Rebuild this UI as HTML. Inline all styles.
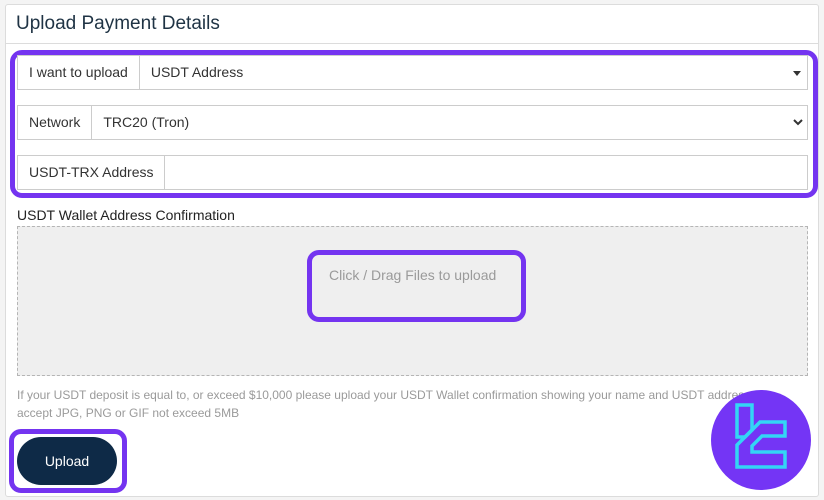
<!DOCTYPE html>
<html><head><meta charset="utf-8"><style>
*{box-sizing:border-box;margin:0;padding:0}
body{width:824px;height:500px;background:#f4f4f4;font-family:"Liberation Sans",Arial,sans-serif;position:relative;overflow:hidden}
.card{position:absolute;left:5px;top:4px;width:814px;height:493px;background:#fff;border:1px solid #dcdcdc;border-radius:3px}
.hdr{position:absolute;left:6px;top:5px;width:812px;height:39px;border-bottom:1px solid #dcdcdc;font-size:19px;color:#1f3344;padding:8px 0 0 10px}
.pb{position:absolute;border:5px solid #7434f0;border-radius:12px}
.row{position:absolute;left:17px;width:791px;height:35px;border:1px solid #ccc;background:#fff;font-size:14px;color:#333;display:flex}
.row .lab{background:#fff;border-right:1px solid #ccc;padding:0 11px;line-height:33px;white-space:nowrap}
.row .val{padding-left:11px;line-height:33px;flex:1;position:relative}
.lbl{position:absolute;left:17px;top:207px;font-size:14px;color:#222}
.dz{position:absolute;left:17px;top:226px;width:791px;height:150px;background:#efefef;border:1px dashed #b5b5b5}
.dzt{position:absolute;left:329px;top:267px;font-size:14px;color:#9a9a9a}
.note{position:absolute;left:17px;top:386px;font-size:12px;color:#9a9a9a;line-height:18px;width:760px}
.btn{position:absolute;left:17px;top:437px;width:100px;height:48px;background:#0e2a47;border-radius:24px;color:#fff;font-size:14px;text-align:center;line-height:48px}
</style></head><body>
<div class="card"></div>
<div class="hdr">Upload Payment Details</div>
<div class="pb" style="left:10px;top:50px;width:808px;height:148px"></div>
<div class="row" style="top:55px"><div class="lab">I want to upload</div><div class="val">USDT Address<span style="position:absolute;right:6px;top:15px;border-left:4px solid transparent;border-right:4px solid transparent;border-top:5px solid #333"></span></div></div>
<div class="row" style="top:105px"><div class="lab">Network</div><div class="val">TRC20 (Tron)<svg style="position:absolute;right:4px;top:12px" width="10" height="8" viewBox="0 0 10 8"><path d="M1 2 L5 6 L9 2" stroke="#333" stroke-width="2" fill="none"/></svg></div></div>
<div class="row" style="top:155px"><div class="lab">USDT-TRX Address</div><div class="val"></div></div>
<div class="lbl">USDT Wallet Address Confirmation</div>
<div class="dz"></div>
<div class="pb" style="left:307px;top:250px;width:219px;height:72px"></div>
<div class="dzt">Click / Drag Files to upload</div>
<div class="note">If your USDT deposit is equal to, or exceed $10,000 please upload your USDT Wallet confirmation showing your name and USDT address. We accept JPG, PNG or GIF not exceed 5MB</div>
<div class="pb" style="left:9px;top:429px;width:118px;height:64px"></div>
<div class="btn">Upload</div>
<svg style="position:absolute;left:0;top:0" width="824" height="500">
<circle cx="761" cy="440" r="50" fill="#7435f5"/>
<g fill="none" stroke="#33d6f5" stroke-width="3.5" stroke-linejoin="miter">
<path d="M737 405 H752 V430 L745 437 H737 Z"/>
<path d="M785 422 H760 L737 445 V467 H785 V452 H752 V446 L762 436 H785 Z"/>
</g>
</svg>
</body></html>
